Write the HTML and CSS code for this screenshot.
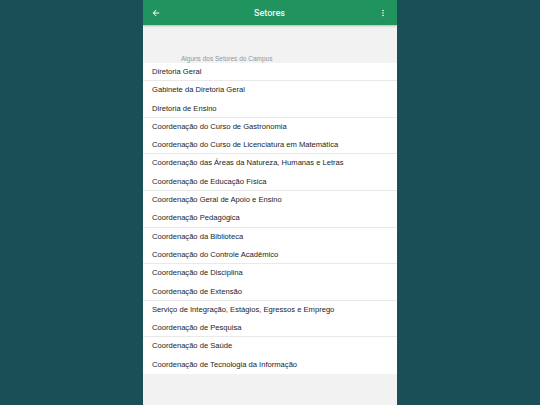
FILE: index.html
```
<!DOCTYPE html>
<html lang="pt">
<head>
<meta charset="utf-8">
<link rel="stylesheet" href="styles.css">
</head>
<body>
<div class="screen">
  <header class="bar">
    <svg class="icon" width="10" height="10" viewBox="0 0 24 24"><path d="M20 11H7.83l5.59-5.59L12 4l-8 8 8 8 1.41-1.41L7.83 13H20v-2z" fill="#fff"/></svg>
    <div class="title">Setores</div>
    <svg class="icon" width="10" height="10" viewBox="0 0 24 24"><path d="M12 8c1.1 0 2-.9 2-2s-.9-2-2-2-2 .9-2 2 .9 2 2 2zm0 2c-1.1 0-2 .9-2 2s.9 2 2 2 2-.9 2-2-.9-2-2-2zm0 6c-1.1 0-2 .9-2 2s.9 2 2 2 2-.9 2-2-.9-2-2-2z" fill="#fff"/></svg>
  </header>
  <div class="label">Alguns dos Setores do Campus</div>
  <ul class="list">
    <li class="sep">Diretoria Geral</li>
    <li>Gabinete da Diretoria Geral</li>
    <li class="sep">Diretoria de Ensino</li>
    <li>Coordenação do Curso de Gastronomia</li>
    <li class="sep">Coordenação do Curso de Licenciatura em Matemática</li>
    <li>Coordenação das Áreas da Natureza, Humanas e Letras</li>
    <li class="sep">Coordenação de Educação Física</li>
    <li>Coordenação Geral de Apoio e Ensino</li>
    <li class="sep">Coordenação Pedagógica</li>
    <li>Coordenação da Biblioteca</li>
    <li class="sep">Coordenação do Controle Acadêmico</li>
    <li>Coordenação de Disciplina</li>
    <li class="sep">Coordenação de Extensão</li>
    <li>Serviço de Integração, Estágios, Egressos e Emprego</li>
    <li class="sep">Coordenação de Pesquisa</li>
    <li>Coordenação de Saúde</li>
    <li>Coordenação de Tecnologia da Informação</li>
  </ul>
</div>
</body>
</html>
```
FILE: styles.css
```
html, body {
  margin: 0;
  padding: 0;
  height: 100%;
}
body {
  background: #1b4f58;
  font-family: "Liberation Sans", Arial, sans-serif;
  display: flex;
  justify-content: center;
}
.screen {
  width: 254px;
  height: 405px;
  background: #f2f2f2;
  display: flex;
  flex-direction: column;
  overflow: hidden;
}
.bar {
  height: 25px;
  flex: none;
  background: #21935f;
  display: flex;
  align-items: center;
  justify-content: space-between;
  padding: 0 9px 0 8px;
  box-shadow: 0 1px 2px rgba(0,0,0,0.25);
  position: relative;
  z-index: 1;
}
.icon {
  display: block;
}
.title {
  color: #eef7f2;
  font-family: Roboto, "Liberation Sans", sans-serif;
  font-size: 9px;
  font-weight: 500;
}
.label {
  height: 38px;
  box-sizing: border-box;
  padding: 30px 0 0 38px;
  font-size: 6.5px;
  line-height: 8px;
  color: #8c98a2;
  overflow: hidden;
}
.list {
  list-style: none;
  margin: 0;
  padding: 0;
  background: #fff;
}
.list li {
  height: 18.3px;
  box-sizing: border-box;
  padding-left: 9px;
  font-size: 7.6px;
  line-height: 18.3px;
  color: #1c1c1c;
  white-space: nowrap;
}
.list li.sep {
  border-bottom: 1px solid #e9e9e9;
}
```
